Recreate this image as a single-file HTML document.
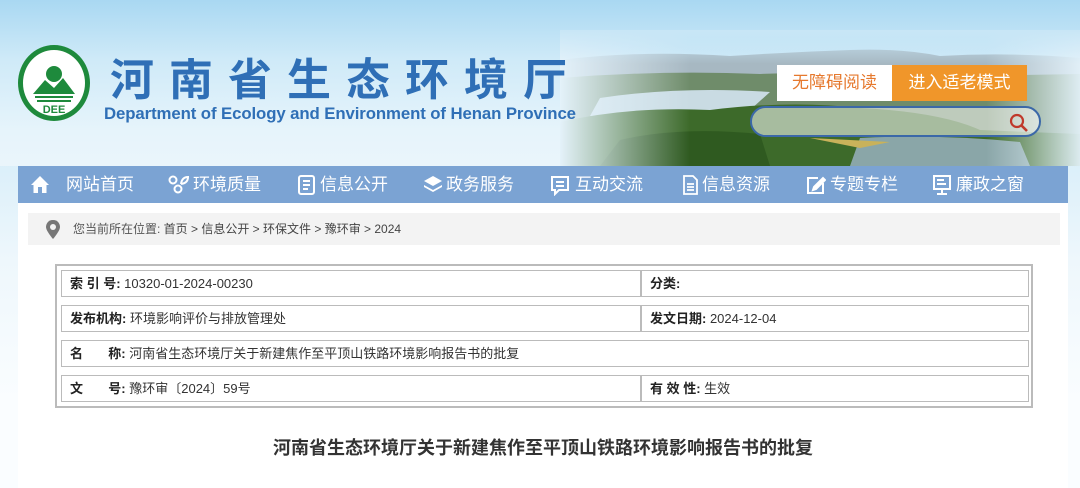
<!DOCTYPE html>
<html><head><meta charset="utf-8"><style>
*{margin:0;padding:0;box-sizing:border-box}
body{width:1080px;height:488px;overflow:hidden;font-family:"Liberation Sans","Noto Sans CJK SC",sans-serif;background:linear-gradient(180deg,#bfe3f6 0,#d8eef9 150px,#eef7fc 260px,#fafdff 400px);position:relative}
.hdr{position:absolute;left:0;top:0;width:1080px;height:166px;background:linear-gradient(180deg,#a9d8f2 0,#cfeaf8 60px,#e6f4fb 130px,#eaf5fb 166px)}
.land{position:absolute;left:560px;top:30px;width:520px;height:136px;overflow:hidden}
.logo{position:absolute;left:18px;top:45px;width:72px;height:76px;border-radius:50%;background:#fff;border:5px solid #1e8a3c}
.title{position:absolute;left:110px;top:46px;font-size:44px;font-weight:bold;color:#2f6fb6;letter-spacing:15px;font-family:"Noto Sans CJK SC",sans-serif;line-height:60px}
.en{position:absolute;left:104px;top:104px;font-size:16.8px;font-weight:bold;color:#2f6fb6;letter-spacing:-0.1px}
.btn1{position:absolute;left:777px;top:65px;width:115px;height:36px;background:#fff;color:#e6792e;font-size:17px;text-align:center;line-height:36px}
.btn2{position:absolute;left:892px;top:65px;width:135px;height:36px;background:#f0962a;color:#fff;font-size:17px;text-align:center;line-height:36px}
.search{position:absolute;left:750px;top:106px;width:291px;height:31px;border:2px solid #3b68a8;border-radius:16px;background:rgba(255,255,255,.55)}
.nav{position:absolute;left:18px;top:166px;width:1050px;height:37px;background:#7ba3d3;color:#fff;font-size:17px}
.nav span{position:absolute;top:0;line-height:37px}
.nav svg{position:absolute;top:9px}
.main{position:absolute;left:18px;top:203px;width:1050px;height:285px;background:#fff}
.bc{position:absolute;left:28px;top:213px;width:1032px;height:32px;background:#f3f3f3;font-size:12px;color:#555;line-height:32px}
.tbl{position:absolute;left:55px;top:264px;width:978px;height:144px;border:2px solid #bbb}
.c{position:absolute;height:27px;border:1px solid #bbb;font-size:13px;line-height:25px;padding-left:8px;color:#333}
.c b{color:#222}
.h1{position:absolute;left:0;width:1086px;top:434px;text-align:center;font-size:18px;font-weight:bold;color:#333}
</style></head><body>
<div class="hdr"></div>
<div class="land"><svg width="520" height="136">
<defs>
<linearGradient id="fl" x1="0" x2="1"><stop offset="0" stop-color="#e4f2fa" stop-opacity="1"/><stop offset=".25" stop-color="#e4f2fa" stop-opacity="0"/><stop offset=".82" stop-color="#e4f2fa" stop-opacity="0"/><stop offset="1" stop-color="#e4f2fa" stop-opacity=".95"/></linearGradient>
<linearGradient id="ft" x1="0" y1="0" x2="0" y2="1"><stop offset="0" stop-color="#c8e6f6" stop-opacity="1"/><stop offset=".25" stop-color="#c8e6f6" stop-opacity="0"/></linearGradient>
</defs>
<path d="M0 30 Q80 20 170 26 Q230 22 290 20 Q340 18 380 26 Q450 22 520 28 L520 136 L0 136Z" fill="#a7b8c2"/>
<path d="M0 48 Q100 40 200 44 Q300 40 400 46 L520 44 L520 136 L0 136Z" fill="#6f8c6a"/>
<path d="M40 68 Q120 56 210 62 L190 80 Q110 90 30 86Z" fill="#c9dbe3"/>
<path d="M0 92 Q70 76 150 80 Q230 70 300 78 Q380 82 420 100 L520 104 L520 136 L0 136Z" fill="#3d6a2a"/>
<path d="M60 110 Q120 96 200 104 L210 136 L40 136Z" fill="#2f5a20"/>
<path d="M300 108 Q380 104 460 112 L470 136 L290 136Z" fill="#8aa6a8"/>
<path d="M250 108 L330 112 L300 118Z" fill="#c9b25a"/>
<rect width="520" height="136" fill="url(#fl)"/>
<rect width="520" height="136" fill="url(#ft)"/>
</svg></div>
<div class="logo"><svg width="62" height="66" viewBox="0 0 62 66"><circle cx="31" cy="24" r="8" fill="#1e8a3c"/><path d="M10 44 L22 30 L31 38 L40 28 L52 44Z" fill="#1e8a3c"/><rect x="12" y="46" width="38" height="2" fill="#1e8a3c"/><rect x="14" y="50" width="34" height="2" fill="#1e8a3c"/><text x="31" y="63" text-anchor="middle" font-size="11" font-weight="bold" fill="#1e8a3c" font-family="Liberation Sans">DEE</text></svg></div>
<div class="title">河南省生态环境厅</div>
<div class="en">Department of Ecology and Environment of Henan Province</div>
<div class="btn1">无障碍阅读</div><div class="btn2">进入适老模式</div>
<div class="search"><svg style="position:absolute;right:10px;top:5px" width="20" height="20"><circle cx="8" cy="8" r="6" fill="none" stroke="#c0392b" stroke-width="2.2"/><path d="M12.5 12.5 L18 18" stroke="#c0392b" stroke-width="2.6"/></svg></div>
<div class="nav">
<svg style="left:12px" width="20" height="19"><path d="M10 1 L1 10 L3.5 10 L3.5 18 L8 18 L8 12 L12 12 L12 18 L16.5 18 L16.5 10 L19 10Z" fill="#fff"/></svg><span style="left:48px">网站首页</span>
<svg style="left:150px" width="22" height="19" fill="none" stroke="#fff" stroke-width="2"><circle cx="5" cy="5" r="3.5"/><circle cx="10" cy="14" r="3.5"/><path d="M13 9 Q14 2 20 2 Q20 8 13 9"/></svg><span style="left:175px">环境质量</span>
<svg style="left:279px" width="19" height="20" fill="none" stroke="#fff" stroke-width="2"><rect x="2" y="1" width="15" height="18" rx="2"/><path d="M6 6h7M6 10h7M6 14h5"/></svg><span style="left:302px">信息公开</span>
<svg style="left:405px" width="20" height="19" fill="#fff"><path d="M10 1 L19 6 L10 11 L1 6Z"/><path d="M1 10 L10 15 L19 10 L19 12 L10 17 L1 12Z"/></svg><span style="left:428px">政务服务</span>
<svg style="left:532px" width="20" height="21" fill="none" stroke="#fff" stroke-width="2"><path d="M2 2h16v13H9l-4 4v-4H2Z"/><path d="M6 7h8M6 11h8"/></svg><span style="left:557px">互动交流</span>
<svg style="left:664px" width="17" height="20" fill="none" stroke="#fff" stroke-width="1.8"><path d="M2 1h9l4 4v14H2Z"/><path d="M5 9h7M5 12h7M5 15h7"/></svg><span style="left:684px">信息资源</span>
<svg style="left:788px" width="20" height="20" fill="none" stroke="#fff" stroke-width="2"><path d="M12 3H2v15h15V8"/><path d="M8 12 L17 3 L19 5 L10 14 L7 15Z" fill="#fff"/></svg><span style="left:812px">专题专栏</span>
<svg style="left:914px" width="20" height="21" fill="none" stroke="#fff" stroke-width="2"><rect x="2" y="1" width="16" height="13"/><path d="M5 5h7M5 9h9M10 14v4M5 19h10"/></svg><span style="left:938px">廉政之窗</span>
</div>
<div class="main"></div>
<div class="bc"><svg style="position:absolute;left:18px;top:7px" width="14" height="19"><path d="M7 0 C2 0 0 4 0 7 C0 11 7 19 7 19 C7 19 14 11 14 7 C14 4 12 0 7 0Z" fill="#777"/><circle cx="7" cy="7" r="3" fill="#f3f3f3"/></svg><span style="position:absolute;left:45px">您当前所在位置: <span style="color:#444">首页 &gt; 信息公开 &gt; 环保文件 &gt; 豫环审 &gt; 2024</span></span></div>
<div class="tbl">
<div class="c" style="left:4px;top:4px;width:580px"><b>索 引 号:</b> 10320-01-2024-00230</div>
<div class="c" style="left:584px;top:4px;width:388px"><b>分类:</b></div>
<div class="c" style="left:4px;top:39px;width:580px"><b>发布机构:</b> 环境影响评价与排放管理处</div>
<div class="c" style="left:584px;top:39px;width:388px"><b>发文日期:</b> 2024-12-04</div>
<div class="c" style="left:4px;top:74px;width:968px"><b>名&nbsp;&nbsp;&nbsp;&nbsp;&nbsp;&nbsp;&nbsp;称:</b> 河南省生态环境厅关于新建焦作至平顶山铁路环境影响报告书的批复</div>
<div class="c" style="left:4px;top:109px;width:580px"><b>文&nbsp;&nbsp;&nbsp;&nbsp;&nbsp;&nbsp;&nbsp;号:</b> 豫环审〔2024〕59号</div>
<div class="c" style="left:584px;top:109px;width:388px"><b>有 效 性:</b> 生效</div>
</div>
<div class="h1">河南省生态环境厅关于新建焦作至平顶山铁路环境影响报告书的批复</div>
</body></html>
